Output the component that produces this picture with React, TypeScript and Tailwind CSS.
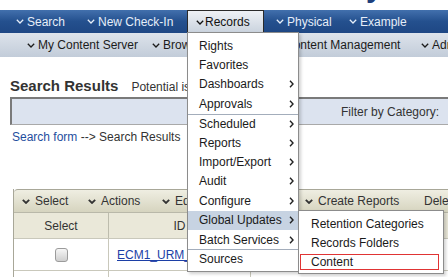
import React from "react";

const Down = ({ w = 8, sw = 1.3 }: { w?: number; sw?: number }) => (
  <svg width={w} height="5" viewBox="0 0 8 5" className="shrink-0">
    <path d="M0.8 0.8 L4 4 L7.2 0.8" fill="none" stroke="currentColor" strokeWidth={sw} />
  </svg>
);

const Right = () => (
  <svg width="5" height="8" viewBox="0 0 5 8" className="shrink-0">
    <path d="M1 0.8 L4 4 L1 7.2" fill="none" stroke="#222" strokeWidth="1.4" />
  </svg>
);

const NavItem = ({ label, w }: { label: string; w: string }) => (
  <div className={`flex shrink-0 items-center gap-[3px] ${w}`}>
    <Down />
    <span>{label}</span>
  </div>
);

const ToolItem = ({ label, w }: { label: string; w: string }) => (
  <div className={`flex shrink-0 items-center gap-[5px] ${w}`}>
    <Down w={8} sw={1.8} />
    <span>{label}</span>
  </div>
);

const menu = [
  { label: "Rights" },
  { label: "Favorites" },
  { label: "Dashboards", sub: true },
  { label: "Approvals", sub: true },
  { label: "Scheduled", sub: true, sep: true },
  { label: "Reports", sub: true },
  { label: "Import/Export", sub: true },
  { label: "Audit", sub: true },
  { label: "Configure", sub: true },
  { label: "Global Updates", sub: true, active: true },
  { label: "Batch Services", sub: true },
  { label: "Sources", sep: true },
];

export default function App() {
  return (
    <div className="relative h-[277px] w-[448px] overflow-hidden whitespace-nowrap bg-white font-['Liberation_Sans',Arial,sans-serif] text-[12px] text-[#222]">
      {/* logo strip, clipped */}
      <div className="h-[10px] overflow-hidden pl-[366px]">
        <div className="-mt-[28px] text-[30px] font-bold leading-[30px] text-[#1d3f7c]">y</div>
      </div>

      {/* main nav */}
      <nav className="flex h-[23px] items-stretch bg-linear-to-b from-[#4270ad] via-[#24508e] to-[#1e4784] pl-[16px] text-[#e6eef9]">
        <NavItem label="Search" w="w-[71px]" />
        <NavItem label="New Check-In" w="w-[100px]" />
        <div className="flex w-[77px] shrink-0 items-center gap-[1px] border border-b-0 border-[#2a2a2a] bg-linear-to-b from-[#eef1f5] to-[#c9d2dd] pl-[8px] text-[#111]">
          <Down />
          <span>Records</span>
        </div>
        <div className="ml-[12px] flex shrink-0">
          <NavItem label="Physical" w="w-[73px]" />
          <NavItem label="Example" w="w-[90px]" />
        </div>
      </nav>

      {/* sub nav */}
      <div className="flex h-[24px] items-center bg-linear-to-b from-[#dde3eb] to-[#c2ccd9] pl-[27px] text-[#1b1b1b]">
        <NavItem label="My Content Server" w="w-[125px]" />
        <NavItem label="Browse Content" w="w-[122px]" />
        <NavItem label="Content Management" w="w-[147px]" />
        <NavItem label="Administration" w="w-[120px]" />
      </div>

      {/* page title */}
      <div className="mt-[20px] flex h-[18px] items-baseline gap-[13px] pl-[10px]">
        <h1 className="text-[15px] font-bold leading-[18px] text-[#333]">Search Results</h1>
        <span className="text-[#333]">Potential issues</span>
      </div>

      <div className="ml-[10px] mt-[2px] flex h-[28px] w-[450px] items-center border-b border-l-2 border-t-2 border-[#7a7a7a] border-b-[#a9a9a9] bg-[#dce3ef] pl-[329px] text-[#333]">
        Filter by Category:
      </div>

      <div className="mt-[5px] h-[14px] pl-[12px] leading-[14px]">
        <span className="text-[#1f4e9e]">Search form</span>
        <span className="text-[#333]"> --&gt; Search Results</span>
      </div>

      {/* results table */}
      <div className="ml-[13px] mt-[45px] w-[450px] border-l border-[#a8a798]">
        <div className="flex h-[23px] items-center rounded-tl-[4px] border-t border-[#a8a798] bg-linear-to-b from-[#efeee2] to-[#d6d4bf] pl-[8px] text-[#333]">
          <ToolItem label="Select" w="w-[66px]" />
          <ToolItem label="Actions" w="w-[74px]" />
          <ToolItem label="Edit" w="w-[143px]" />
          <ToolItem label="Create Reports" w="w-[119px]" />
          <span>Delete</span>
        </div>
        <div className="flex h-[26px] border-t border-[#b9b8a9] bg-[#eae8d9] text-[#333]">
          <div className="flex w-[95px] items-center justify-center border-r border-[#bdbcad]">Select</div>
          <div className="flex w-[142px] items-center justify-center border-r border-[#bdbcad]">ID</div>
          <div className="flex flex-1 items-center pl-[8px]">Title</div>
        </div>
        <div className="flex h-[32px] border-t border-[#c9c8bb]">
          <div className="flex w-[95px] items-center justify-center border-r border-[#c9c8bb]">
            <div className="h-[14px] w-[13px] rounded-[3px] border border-[#9b9b9b] bg-linear-to-b from-[#f6f6f6] to-[#cfcfcf]" />
          </div>
          <div className="flex w-[142px] items-center border-r border-[#c9c8bb] pl-[8px]">
            <a className="text-[#1c3fa6] underline">ECM1_URM_00001</a>
          </div>
          <div className="flex-1" />
        </div>
        <div className="flex h-[20px] border-t border-[#c9c8bb]">
          <div className="w-[95px] border-r border-[#c9c8bb]" />
          <div className="w-[142px] border-r border-[#c9c8bb]" />
        </div>
      </div>

      {/* Records dropdown */}
      <div className="absolute left-[187px] top-[32px] w-[112px] border border-[#8c8c8c] bg-white pb-[2px] pt-[3px] text-[#1a1a1a] shadow-[2px_2px_3px_rgba(0,0,0,0.18)]">
        {menu.map((m) => (
          <div
            key={m.label}
            className={`flex h-[19.4px] items-center justify-between pl-[11px] pr-[4px] ${
              m.sep ? "border-t border-[#a3adbb]" : ""
            } ${m.active ? "bg-[#c7d3e2]" : ""}`}
          >
            <span>{m.label}</span>
            {m.sub && <Right />}
          </div>
        ))}
      </div>

      {/* Global Updates submenu */}
      <div className="absolute left-[298px] top-[210px] w-[146px] border border-[#8c8c8c] bg-white pb-[1px] pt-[3px] text-[#1a1a1a] shadow-[2px_2px_3px_rgba(0,0,0,0.18)]">
        <div className="flex h-[19.4px] items-center pl-[12px]">Retention Categories</div>
        <div className="flex h-[19.4px] items-center pl-[12px]">Records Folders</div>
        <div className="h-[19.4px] pl-[1px] pr-[4px] pt-[1px]">
          <div className="flex h-[16px] items-center border border-[#e03434] pl-[10px]">Content</div>
        </div>
      </div>
    </div>
  );
}
